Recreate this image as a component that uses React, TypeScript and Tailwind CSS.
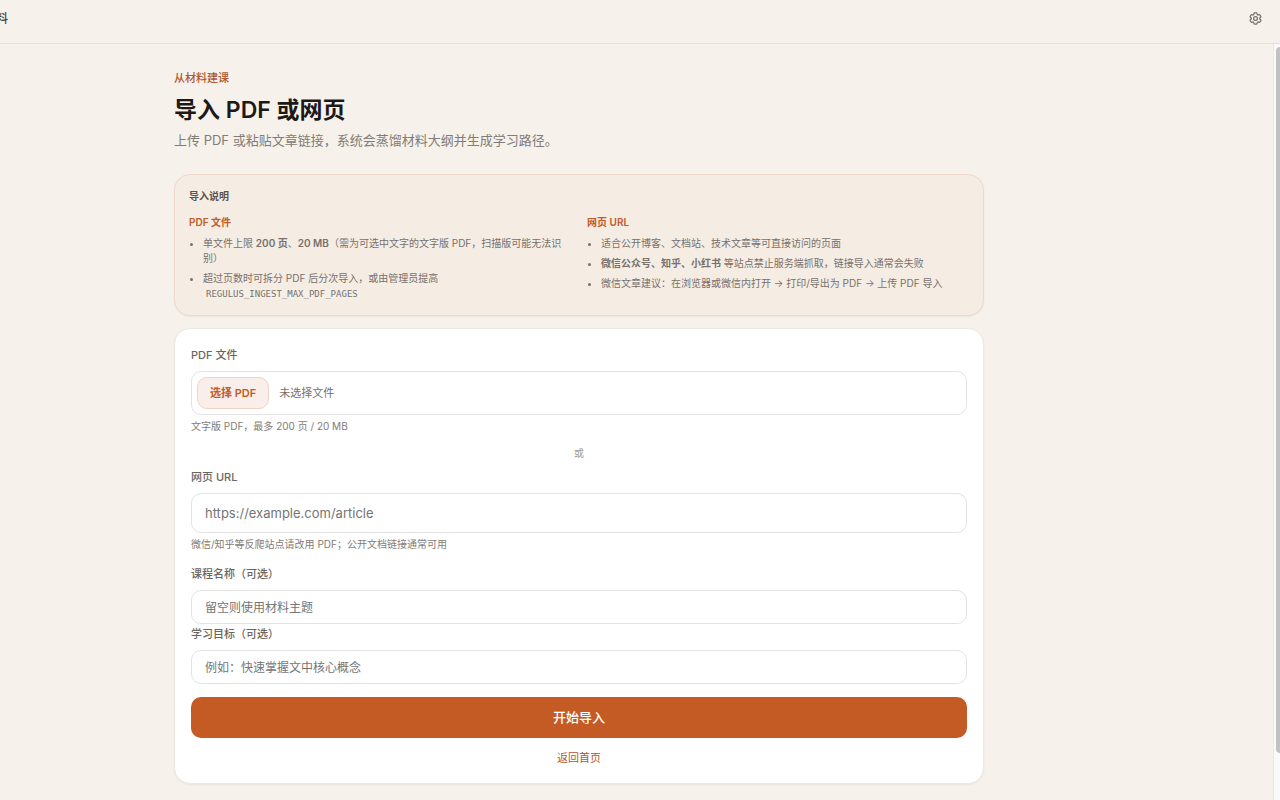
import { useRef, useState, ChangeEvent, FormEvent } from 'react';

const inputClass =
  'block w-full rounded-[10px] border border-[#e3e3e3] bg-white px-[13px] text-[#57534e] placeholder-[#757575] outline-none focus:border-[#c45a24]';
const labelClass = 'block text-[11px] leading-5 font-medium text-[#6b6560]';
const hintClass = 'mt-1 text-[10px] leading-[14px] text-[#827c76]';

function GearIcon() {
  return (
    <svg
      className="size-[15px]"
      viewBox="0 0 24 24"
      fill="none"
      stroke="currentColor"
      strokeWidth="2"
      strokeLinecap="round"
      strokeLinejoin="round"
      aria-hidden="true"
    >
      <path d="M9.594 3.94c.09-.542.56-.94 1.11-.94h2.593c.55 0 1.02.398 1.11.94l.213 1.281c.063.374.313.686.645.87.074.04.147.083.22.127.325.196.72.257 1.075.124l1.217-.456a1.125 1.125 0 0 1 1.37.49l1.296 2.247a1.125 1.125 0 0 1-.26 1.431l-1.003.827c-.293.241-.438.613-.43.992a7.723 7.723 0 0 1 0 .255c-.008.378.137.75.43.991l1.004.827c.424.35.534.955.26 1.43l-1.298 2.247a1.125 1.125 0 0 1-1.369.491l-1.217-.456c-.355-.133-.75-.072-1.076.124a6.47 6.47 0 0 1-.22.128c-.331.183-.581.495-.644.869l-.213 1.281c-.09.543-.56.94-1.11.94h-2.594c-.55 0-1.019-.398-1.11-.94l-.213-1.281c-.062-.374-.312-.686-.644-.87a6.52 6.52 0 0 1-.22-.127c-.325-.196-.72-.257-1.076-.124l-1.217.456a1.125 1.125 0 0 1-1.369-.49l-1.297-2.247a1.125 1.125 0 0 1 .26-1.431l1.004-.827c.292-.24.437-.613.43-.991a6.932 6.932 0 0 1 0-.255c.007-.38-.138-.751-.43-.992l-1.004-.827a1.125 1.125 0 0 1-.26-1.43l1.297-2.247a1.125 1.125 0 0 1 1.37-.491l1.216.456c.356.133.751.072 1.076-.124.072-.044.146-.086.22-.128.332-.183.582-.495.644-.869l.214-1.28Z" />
      <circle cx="12" cy="12" r="3" />
    </svg>
  );
}

function ImportNotes() {
  return (
    <section className="mt-6 rounded-2xl border border-[#efd9cb] bg-[#f5ece3] px-3.5 pt-3.5 pb-[13px] shadow-xs">
      <h2 className="text-[10px] leading-[14px] font-semibold text-[#57534e]">导入说明</h2>
      <div className="mt-3 grid grid-cols-2 gap-4 text-[10px] leading-[15px] text-[#78716c]">
        <div>
          <h3 className="leading-[14px] font-semibold text-[#c45a24]">PDF 文件</h3>
          <ul className="mt-[7px] list-disc space-y-[5px] pl-3.5">
            <li>
              单文件上限 <strong className="font-semibold">200 页</strong>、
              <strong className="font-semibold">20 MB</strong>（需为可选中文字的文字版 PDF，扫描版可能无法识别）
            </li>
            <li>
              超过页数时可拆分 PDF 后分次导入，或由管理员提高{' '}
              <code className="rounded-sm bg-[#f4efe7] px-[3px] font-['DejaVu_Sans_Mono',monospace] text-[9px]">
                REGULUS_INGEST_MAX_PDF_PAGES
              </code>
            </li>
          </ul>
        </div>
        <div>
          <h3 className="leading-[14px] font-semibold text-[#c45a24]">网页 URL</h3>
          <ul className="mt-[7px] list-disc space-y-[5px] pl-3.5">
            <li>适合公开博客、文档站、技术文章等可直接访问的页面</li>
            <li>
              <strong className="font-semibold">微信公众号、知乎、小红书</strong> 等站点禁止服务端抓取，链接导入通常会失败
            </li>
            <li>微信文章建议：在浏览器或微信内打开 → 打印/导出为 PDF → 上传 PDF 导入</li>
          </ul>
        </div>
      </div>
    </section>
  );
}

export default function App() {
  const fileRef = useRef<HTMLInputElement>(null);
  const [fileName, setFileName] = useState('');
  const [url, setUrl] = useState('');
  const [courseName, setCourseName] = useState('');
  const [goal, setGoal] = useState('');

  const handleFile = (event: ChangeEvent<HTMLInputElement>) => {
    setFileName(event.target.files?.[0]?.name ?? '');
  };

  const handleSubmit = (event: FormEvent<HTMLFormElement>) => {
    event.preventDefault();
  };

  return (
    <div
      lang="zh-CN"
      className="flex h-screen flex-col overflow-hidden bg-[#f6f1ea] font-['Inter','Noto_Sans_CJK_SC',sans-serif] text-[#1c1917]"
    >
      <header className="flex h-11 shrink-0 items-start justify-between border-b border-[#e5e0d8] pt-[11px] pr-[17px]">
        <span className="-ml-1 text-xs font-medium text-[#44403c]">料</span>
        <button type="button" aria-label="设置" className="text-[#78716c]">
          <GearIcon />
        </button>
      </header>

      <div className="flex min-h-0 flex-1">
        <main className="-ml-[115px] min-w-0 flex-1 overflow-hidden">
          <div className="mx-auto max-w-[810px] pt-[25px] pb-4">
            <p className="text-[11px] leading-[18px] font-medium text-[#b0562b]">从材料建课</p>
            <h1 className="mt-2 text-[23px] leading-[30px] font-semibold">导入 PDF 或网页</h1>
            <p className="mt-[5px] text-[13px] leading-5 text-[#827c76]">
              上传 PDF 或粘贴文章链接，系统会蒸馏材料大纲并生成学习路径。
            </p>

            <ImportNotes />

            <form
              onSubmit={handleSubmit}
              className="mt-3 rounded-2xl border border-[#ece9e4] bg-white p-4 shadow-xs"
            >
              <label htmlFor="pdf-file" className={labelClass}>
                PDF 文件
              </label>
              <div className="mt-1.5 flex h-11 items-center gap-2.5 rounded-[10px] border border-[#e3e3e3] px-[5px]">
                <input
                  id="pdf-file"
                  ref={fileRef}
                  type="file"
                  accept="application/pdf"
                  onChange={handleFile}
                  className="hidden"
                />
                <button
                  type="button"
                  onClick={() => fileRef.current?.click()}
                  className="h-8 rounded-[10px] border border-[#f0d3c6] bg-[#f9eeea] px-3 text-[11px] font-semibold text-[#c45a24]"
                >
                  选择 PDF
                </button>
                <span className="text-[11px] text-[#78716c]">{fileName || '未选择文件'}</span>
              </div>
              <p className={hintClass}>文字版 PDF，最多 200 页 / 20 MB</p>

              <p className="mt-3 text-center text-[10px] leading-4 text-[#a29c96]">或</p>

              <label htmlFor="page-url" className={`mt-1.5 ${labelClass}`}>
                网页 URL
              </label>
              <input
                id="page-url"
                type="url"
                value={url}
                onChange={(e) => setUrl(e.target.value)}
                placeholder="https://example.com/article"
                className={`mt-1.5 h-10 text-[13px] ${inputClass}`}
              />
              <p className={hintClass}>微信/知乎等反爬站点请改用 PDF；公开文档链接通常可用</p>

              <label htmlFor="course-name" className={`mt-[13px] ${labelClass}`}>
                课程名称（可选）
              </label>
              <input
                id="course-name"
                type="text"
                value={courseName}
                onChange={(e) => setCourseName(e.target.value)}
                placeholder="留空则使用材料主题"
                className={`mt-1.5 h-[34px] text-xs ${inputClass}`}
              />
              <label htmlFor="goal" className={labelClass}>
                学习目标（可选）
              </label>
              <input
                id="goal"
                type="text"
                value={goal}
                onChange={(e) => setGoal(e.target.value)}
                placeholder="例如：快速掌握文中核心概念"
                className={`mt-1.5 h-[34px] text-xs ${inputClass}`}
              />

              <button
                type="submit"
                className="mt-[13px] h-[41px] w-full rounded-[10px] bg-[#c45a24] text-[13px] font-medium text-white"
              >
                开始导入
              </button>
              <div className="mt-[11px] text-center text-[11px] leading-[18px]">
                <a href="#" className="text-[#b0562b]">
                  返回首页
                </a>
              </div>
            </form>
          </div>
        </main>

        {/* scroll track */}
        <div className="w-[7px] shrink-0 border-l border-[#e8e8e8] bg-[#fafafa] pt-[3px] pl-0.5">
          <div className="h-[706px] rounded-l-full bg-[#c1c1c1]" />
        </div>
      </div>
    </div>
  );
}
